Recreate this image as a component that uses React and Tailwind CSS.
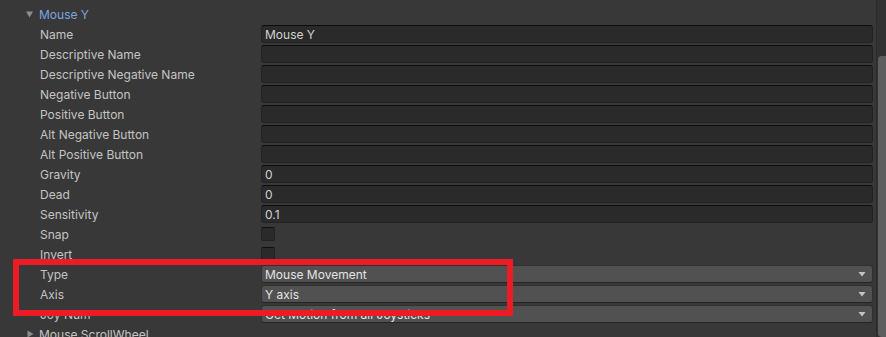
const textRows = [
  { label: 'Name', value: 'Mouse Y' },
  { label: 'Descriptive Name', value: '' },
  { label: 'Descriptive Negative Name', value: '' },
  { label: 'Negative Button', value: '' },
  { label: 'Positive Button', value: '' },
  { label: 'Alt Negative Button', value: '' },
  { label: 'Alt Positive Button', value: '' },
  { label: 'Gravity', value: '0' },
  { label: 'Dead', value: '0' },
  { label: 'Sensitivity', value: '0.1' },
]

const dropdownRows = [
  { label: 'Type', value: 'Mouse Movement' },
  { label: 'Axis', value: 'Y axis' },
  { label: 'Joy Num', value: 'Get Motion from all Joysticks' },
]

function Row({ label, children }) {
  return (
    <div className="flex h-5 items-center">
      <div className="w-[261px] shrink-0 truncate pl-10 pt-px text-[#c4c4c4]">{label}</div>
      <div className="flex min-w-0 flex-1 items-center pr-[3px]">{children}</div>
    </div>
  )
}

function TextField({ value }) {
  return (
    <div className="flex h-[18px] w-full items-center rounded-[3px] border border-[#212121] border-t-[#0d0d0d] bg-[#2a2a2a] px-[3px] pt-px text-[#d2d2d2]">
      {value}
    </div>
  )
}

function Checkbox() {
  return <div className="h-[14px] w-[14px] rounded-[2px] border border-[#212121] border-t-[#0d0d0d] bg-[#2a2a2a]" />
}

function Dropdown({ value }) {
  return (
    <div className="flex h-[18px] w-full items-center justify-between rounded-[3px] border border-[#303030] border-b-[#242424] bg-[#515151] pl-[3px] pr-[6px] text-[#e4e4e4]">
      <span className="truncate pt-px">{value}</span>
      <svg width="8" height="6" viewBox="0 0 8 6" className="shrink-0">
        <path d="M0.5 1 L7.5 1 L4 5.5 Z" fill="#c4c4c4" />
      </svg>
    </div>
  )
}

function Foldout({ label, open, color }) {
  return (
    <div className="flex h-5 items-center pl-[26px]">
      <svg width="8" height="8" viewBox="0 0 8 8" className="mr-[5px] shrink-0">
        {open ? <path d="M0 1.5 L7 1.5 L3.5 7.5 Z" fill="#8c8c8c" /> : <path d="M1.5 0.5 L7.5 4 L1.5 7.5 Z" fill="#8c8c8c" />}
      </svg>
      <span className={`pt-px ${color}`}>{label}</span>
    </div>
  )
}

export default function App() {
  return (
    <div className="relative flex h-[337px] w-[886px] overflow-hidden bg-[#383838] text-[12px] font-['Inter','Liberation_Sans',sans-serif]">
      <div className="min-w-0 flex-1 pt-1">
        <Foldout label="Mouse Y" open color="text-[#7ca5e0]" />
        {textRows.map((row) => (
          <Row key={row.label} label={row.label}>
            <TextField value={row.value} />
          </Row>
        ))}
        <Row label="Snap">
          <Checkbox />
        </Row>
        <Row label="Invert">
          <Checkbox />
        </Row>
        {dropdownRows.map((row) => (
          <Row key={row.label} label={row.label}>
            <Dropdown value={row.value} />
          </Row>
        ))}
        <Foldout label="Mouse ScrollWheel" color="text-[#c4c4c4]" />
      </div>

      <div className="flex w-[10px] shrink-0 border-l border-[#2b2b2b] bg-[#323232] pl-[1px] pt-[56px]">
        <div className="w-full rounded-l-[4px] bg-[#5e5e5e]" />
      </div>

      <div className="pointer-events-none absolute left-[13px] top-[259px] h-[57px] w-[500px] border-[6px] border-[#ed1c24]" />
    </div>
  )
}
